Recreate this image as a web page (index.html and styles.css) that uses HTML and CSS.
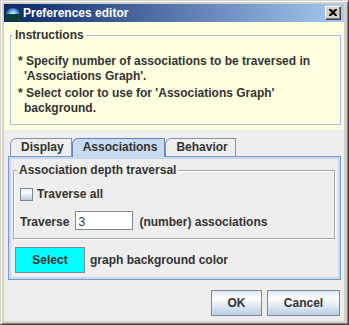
FILE: index.html
```html
<!DOCTYPE html>
<html lang="en">
<head>
<meta charset="utf-8">
<title>Preferences editor</title>
<link rel="stylesheet" href="styles.css">
</head>
<body>
<div class="window">
  <div class="titlebar">
    <svg class="app-icon" width="16" height="16" viewBox="0 0 16 16">
      <defs>
        <radialGradient id="dome" cx="8" cy="9" r="7" gradientUnits="userSpaceOnUse">
          <stop offset="0" stop-color="#e8f4ff"/>
          <stop offset="0.5" stop-color="#6fb2ee"/>
          <stop offset="1" stop-color="#1e4f9c"/>
        </radialGradient>
      </defs>
      <rect x="0" y="0" width="16" height="16" fill="#17306a"/>
      <path d="M1 9 A7 6 0 0 1 15 9 Z" fill="url(#dome)"/>
      <rect x="0" y="9" width="16" height="7" fill="#0f3d3a"/>
    </svg>
    <span class="title">Preferences editor</span>
    <div class="close-btn">
      <svg width="8" height="7" viewBox="0 0 8 7">
        <path d="M0 0h2l2 2 2-2h2v1l-2.5 2.5L8 6v1H6L4 5 2 7H0V6l2.5-2.5L0 1z" fill="#000"/>
      </svg>
    </div>
  </div>

  <div class="instructions">
    <fieldset class="group info">
      <legend>Instructions</legend>
      <p>* Specify number of associations to be traversed in<br>'Associations Graph'.</p>
      <p>* Select color to use for 'Associations Graph'<br>background.</p>
    </fieldset>
  </div>

  <div class="tabpane">
    <div class="tabs">
      <div class="tab">Display</div>
      <div class="tab active">Associations</div>
      <div class="tab">Behavior</div>
    </div>
    <div class="tab-body">
      <fieldset class="group etched">
        <legend>Association depth traversal</legend>
        <div class="row check-row"><span class="checkbox"></span>Traverse all</div>
        <div class="row depth-row">
          <span>Traverse</span>
          <input class="field" type="text" value="3">
          <span>(number) associations</span>
        </div>
      </fieldset>
      <div class="row color-row">
        <button class="color-btn">Select</button>
        <span>graph background color</span>
      </div>
    </div>
  </div>

  <div class="footer">
    <button class="btn ok">OK</button>
    <button class="btn cancel">Cancel</button>
  </div>
</div>
</body>
</html>
```

FILE: styles.css
```css
body {
  margin: 0;
  background: #fff;
  font: bold 12px "Liberation Sans", Arial, sans-serif;
  color: #333;
}
.window {
  width: 349px;
  height: 325px;
  box-sizing: border-box;
  background: #d4d0c8;
  border: 1px solid;
  border-color: #d4d0c8 #404040 #404040 #d4d0c8;
  box-shadow: inset 1px 1px 0 #fff, inset -1px -1px 0 #808080;
  padding: 3px 4px 3px 3px;
  display: flex;
  flex-direction: column;
}
/* title bar */
.titlebar {
  height: 18px;
  display: flex;
  align-items: center;
  padding-left: 1px;
  background: linear-gradient(to right, #0a246a, #a6caf0);
  color: #fff;
}
.app-icon {
  display: block;
}
.title {
  margin-left: 2px;
  line-height: 14px;
  flex: 1;
}
.close-btn {
  width: 16px;
  height: 14px;
  box-sizing: border-box;
  margin-right: 3px;
  background: #d4d0c8;
  border: 1px solid;
  border-color: #fff #404040 #404040 #fff;
  box-shadow: inset -1px -1px 0 #808080;
  display: flex;
  align-items: center;
  justify-content: center;
}
.close-btn svg {
  display: block;
  margin: 0 1px 1px 0;
}
/* instructions */
.instructions {
  background: #ffffe0;
  padding: 6px 3px 5px 6px;
}
.group {
  margin: 0;
  min-width: 0;
}
.group legend {
  padding: 0 2px;
  line-height: 14px;
}
.info {
  border: 1px solid #a6bed8;
  padding: 12px 0 8px 7px;
}
.info legend {
  margin-left: -5px;
}
.info p {
  margin: 0;
  line-height: 15px;
  padding-left: 6px;
  text-indent: -6px;
}
.info p + p {
  margin-top: 2px;
}
/* tabs */
.tabpane {
  flex: 1;
  background: #eee;
  padding-top: 8px;
}
.tabs {
  display: flex;
  padding-left: 6px;
}
.tab {
  height: 17px;
  line-height: 17px;
  padding: 0 7px 0 10px;
  border: 1px solid #8193ad;
  border-bottom: none;
  border-top-left-radius: 6px;
  background: #eee;
}
.tab.active {
  position: relative;
  z-index: 1;
  height: 18px;
  margin-bottom: -1px;
  background: #c8daf0;
  border-color: #6382bf;
}
.tab-body {
  margin: 0 3px 0 4px;
  border: 1px solid #7a9acc;
  box-shadow: inset 0 0 0 2px #c5d9ef;
  padding: 6px 5px 6px 4px;
}
.etched {
  border: 1px solid #a5a5a5;
  box-shadow: 1px 1px 0 #fff, inset 1px 1px 0 #fff;
  padding: 0 0 8px 6px;
}
.etched legend {
  margin-left: -3px;
}
.row {
  display: flex;
  align-items: center;
  line-height: 14px;
}
.check-row {
  margin-top: 10px;
}
.checkbox {
  width: 13px;
  height: 13px;
  box-sizing: border-box;
  border: 1px solid #7a8a99;
  background: linear-gradient(#dde8f3, #fff 30%, #b8cfe5);
  margin-right: 4px;
}
.depth-row {
  margin-top: 10px;
  align-items: baseline;
}
.field {
  width: 58px;
  height: 19px;
  box-sizing: border-box;
  margin: 0 6px;
  padding: 3px 2px 1px;
  border: 1px solid #7a8a99;
  font: 12px "Liberation Sans", Arial, sans-serif;
  color: #333;
  outline: none;
}
.color-row {
  margin-top: 8px;
}
.color-btn {
  width: 70px;
  height: 26px;
  margin: 0 5px 0 2px;
  padding: 0;
  border: 1px solid #7a8a99;
  background: #0ff;
  font: inherit;
  color: #333;
}
/* footer buttons */
.footer {
  display: flex;
  justify-content: flex-end;
  gap: 5px;
  background: #eee;
  padding: 10px 4px 5px 0;
}
.btn {
  height: 26px;
  padding: 0;
  border: 1px solid #7a8a99;
  background: linear-gradient(#dde8f3, #fff 30%, #b8cfe5);
  font: inherit;
  color: #333;
}
.ok {
  width: 51px;
}
.cancel {
  width: 73px;
}
```
